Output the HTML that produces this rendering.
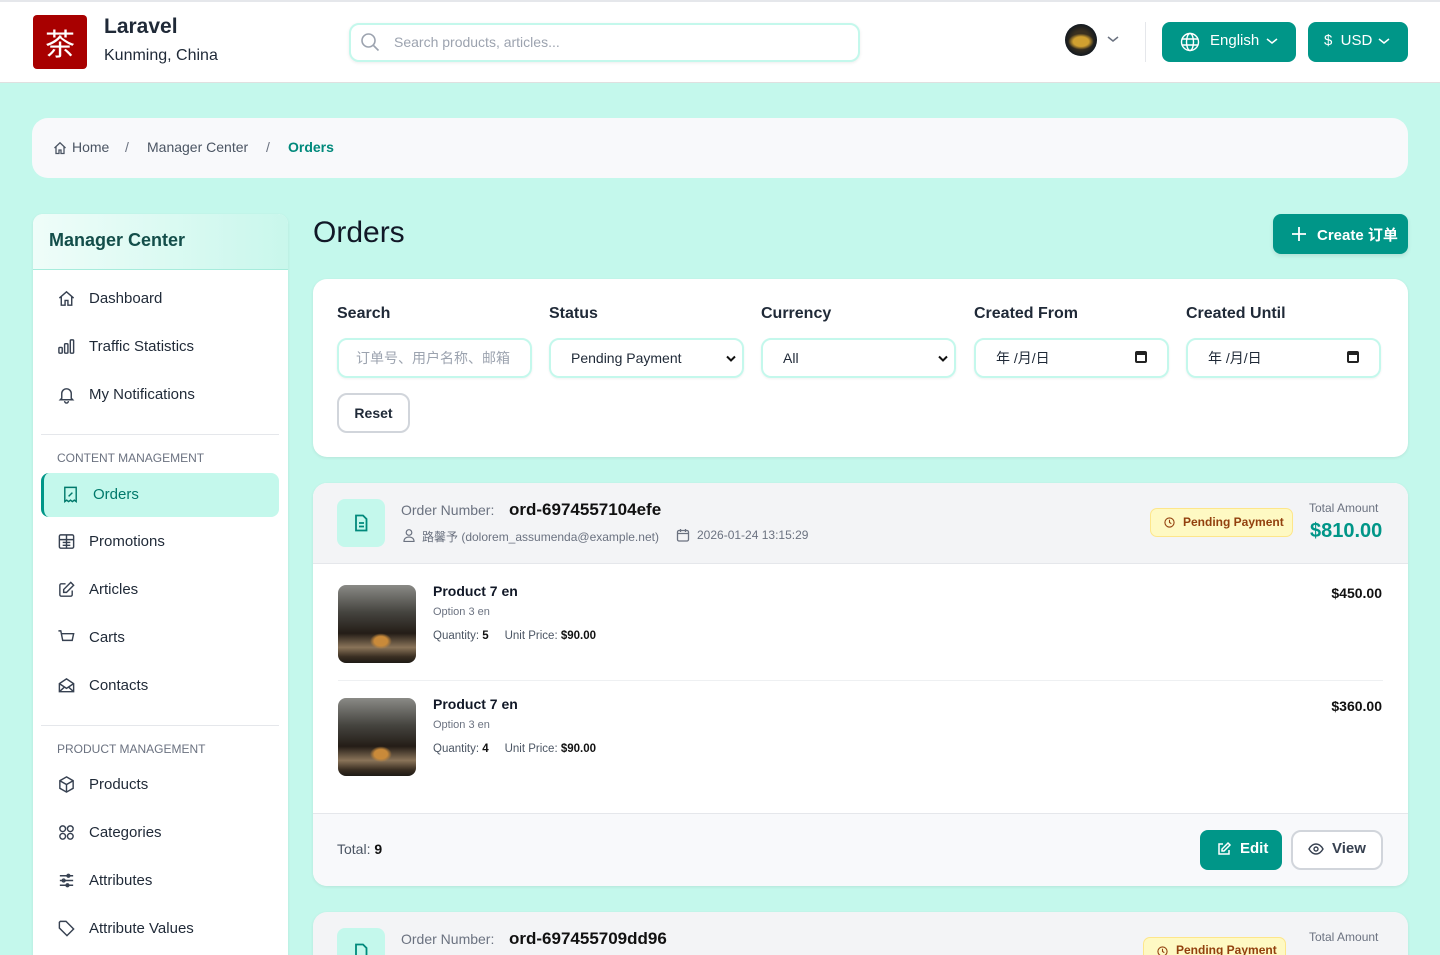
<!DOCTYPE html>
<html style="overflow:hidden;height:955px"><head><meta charset="utf-8"><style>
*{box-sizing:border-box;margin:0;padding:0}
body{width:1440px;height:955px;overflow:hidden;background:#c4f8ec;font-family:"Liberation Sans","Noto Sans CJK SC",sans-serif;color:#1f2937;position:relative}
.abs{position:absolute}
svg{display:block}
.hdr{left:0;top:0;width:1440px;height:83px;background:#fff;border-top:2px solid #e5e7eb;border-bottom:1px solid #e0e0e0}
.teal{background:#009688;color:#fff;border-radius:8px}
.card{background:#fff;border-radius:14px;box-shadow:0 1px 3px rgba(0,0,0,.08)}
.nav{position:absolute;left:57px;font-size:15px;color:#1f2937;display:flex;align-items:center;gap:13px}
.nav svg{width:19px;height:19px;stroke:#374151;fill:none;stroke-width:1.5}
.sec{position:absolute;left:57px;font-size:12px;color:#6b7280}
.lbl{position:absolute;top:305px;font-size:16px;font-weight:bold;color:#1f2937}
.inp{position:absolute;top:338px;width:195px;height:40px;border:2px solid #c4f8ec;border-radius:10px;font-size:14px;padding-left:20px;display:flex;align-items:center;box-shadow:0 1px 2px rgba(0,0,0,.06)}
.thumb{position:absolute;left:338px;width:78px;height:78px;border-radius:8px;background:radial-gradient(ellipse 14% 10% at 55% 72%,#c98a3a 0 60%,transparent 100%),linear-gradient(180deg,#8a8a86 0%,#45443f 35%,#241d17 62%,#8a7459 80%,#3a2e22 92%,#1e1a15 100%)}
.pn{position:absolute;left:433px;font-size:14px;font-weight:bold;color:#111827}
.op{position:absolute;left:433px;font-size:11px;color:#6b7280}
.qt{position:absolute;left:433px;font-size:11.5px;color:#4b5563}
.qt b{color:#111}
.pr{position:absolute;right:58px;font-size:14px;font-weight:bold;color:#111}
</style></head><body>
<div class="abs hdr"></div>
<div class="abs" style="left:33px;top:15px;width:54px;height:54px;background:#a80000;border-radius:4px;color:#fff;font-size:30px;display:flex;align-items:center;justify-content:center;font-family:'Noto Sans CJK SC',sans-serif">茶</div>
<div class="abs" style="left:104px;top:15px;font-size:21px;font-weight:bold;color:#1f2937">Laravel</div>
<div class="abs" style="left:104px;top:47px;font-size:16px;color:#1f2937">Kunming, China</div>
<div class="abs" style="left:349px;top:23px;width:511px;height:39px;border:2px solid #c4f8ec;border-radius:10px;background:#fff;box-shadow:0 1px 3px rgba(0,0,0,.08)"></div>
<svg class="abs" style="left:360px;top:32px" width="20" height="20" viewBox="0 0 20 20" fill="none" stroke="#9ca3af" stroke-width="1.6"><circle cx="8.5" cy="8.5" r="6.5"/><path d="M13.5 13.5l5 5"/></svg>
<div class="abs" style="left:394px;top:34px;font-size:14px;color:#9ca3af">Search products, articles...</div>
<div class="abs" style="left:1065px;top:24px;width:32px;height:32px;border-radius:50%;background:radial-gradient(ellipse 40% 25% at 50% 55%,#d0a030 0 60%,transparent 100%),radial-gradient(circle at 50% 50%,#3a3020 0 40%,#0d1620 75%)"></div>
<svg class="abs" style="left:1106px;top:34px" width="14" height="10" viewBox="0 0 14 10" fill="none" stroke="#6b7280" stroke-width="1.5"><path d="M2 3l5 4 5-4"/></svg>
<div class="abs" style="left:1145px;top:22px;width:1px;height:40px;background:#e5e7eb"></div>
<div class="abs teal" style="left:1162px;top:22px;width:134px;height:40px"></div>
<svg class="abs" style="left:1180px;top:32px" width="20" height="20" viewBox="0 0 20 20" fill="none" stroke="#fff" stroke-width="1.4"><circle cx="10" cy="10" r="8.5"/><ellipse cx="10" cy="10" rx="3.5" ry="8.5"/><path d="M2 7h16M2 13h16"/></svg>
<div class="abs" style="left:1210px;top:32px;font-size:15px;color:#fff">English</div>
<svg class="abs" style="left:1266px;top:37px" width="12" height="8" viewBox="0 0 12 8" fill="none" stroke="#fff" stroke-width="1.5"><path d="M1 2l5 4 5-4"/></svg>
<div class="abs teal" style="left:1308px;top:22px;width:100px;height:40px"></div>
<div class="abs" style="left:1324px;top:32px;font-size:15px;color:#fff">$&nbsp; USD</div>
<svg class="abs" style="left:1378px;top:37px" width="12" height="8" viewBox="0 0 12 8" fill="none" stroke="#fff" stroke-width="1.5"><path d="M1 2l5 4 5-4"/></svg>

<div class="abs" style="left:32px;top:118px;width:1376px;height:60px;background:#f8f9fb;border-radius:16px"></div>
<svg class="abs" style="left:53px;top:141px" width="14" height="14" viewBox="0 0 14 14" fill="none" stroke="#4b5563" stroke-width="1.3"><path d="M1.5 7L7 1.8 12.5 7M3 5.8V12.5h3v-3.5h2v3.5h3V5.8"/></svg>
<div class="abs" style="left:72px;top:139px;font-size:14px;color:#4b5563">Home</div>
<div class="abs" style="left:125px;top:139px;font-size:14px;color:#6b7280">/</div>
<div class="abs" style="left:147px;top:139px;font-size:14px;color:#4b5563">Manager Center</div>
<div class="abs" style="left:266px;top:139px;font-size:14px;color:#6b7280">/</div>
<div class="abs" style="left:288px;top:139px;font-size:14px;color:#00897b;font-weight:bold">Orders</div>

<div class="abs card" style="left:33px;top:214px;width:255px;height:760px;border-radius:10px;overflow:hidden">
<div style="height:56px;background:linear-gradient(90deg,#effdf9,#c9f7ec);border-bottom:1px solid #a7ecdc"></div></div>
<div class="abs" style="left:49px;top:230px;font-size:18px;font-weight:bold;color:#134e4a">Manager Center</div>
<div class="nav" style="top:289px"><svg viewBox="0 0 20 20"><path d="M2.5 9.5L10 3l7.5 6.5M4.5 8v9h4v-5h3v5h4V8"/></svg>Dashboard</div>
<div class="nav" style="top:337px"><svg viewBox="0 0 20 20"><rect x="2" y="11" width="3.5" height="6" rx="1"/><rect x="8" y="7" width="3.5" height="10" rx="1"/><rect x="14" y="3" width="3.5" height="14" rx="1"/></svg>Traffic Statistics</div>
<div class="nav" style="top:385px"><svg viewBox="0 0 20 20"><path d="M5 14V9a5 5 0 0110 0v5l1.5 1.5h-13zM8 17a2 2 0 004 0"/></svg>My Notifications</div>
<div class="abs" style="left:41px;top:434px;width:238px;height:1px;background:#e5e7eb"></div>
<div class="sec" style="top:451px">CONTENT MANAGEMENT</div>
<div class="abs" style="left:41px;top:473px;width:238px;height:44px;background:#c4f8ec;border-radius:8px;border-left:3px solid #009688"></div>
<div class="nav" style="top:485px;left:61px;color:#00796b"><svg viewBox="0 0 20 20" style="stroke:#00796b"><path d="M4 2.5h12v15l-2-1.5-2 1.5-2-1.5-2 1.5-2-1.5-2 1.5zM8 12l4-4M8 8h.01M12 12h.01"/></svg>Orders</div>
<div class="nav" style="top:532px"><svg viewBox="0 0 20 20"><rect x="2.5" y="3" width="15" height="14" rx="1.5"/><path d="M2.5 8h15M10 3v14M6 11h8M6 14h8"/></svg>Promotions</div>
<div class="nav" style="top:580px"><svg viewBox="0 0 20 20"><path d="M9 4H4.5A1.5 1.5 0 003 5.5v10A1.5 1.5 0 004.5 17h10a1.5 1.5 0 001.5-1.5V11M14.5 2.5l3 3L10 13H7v-3z"/></svg>Articles</div>
<div class="nav" style="top:628px"><svg viewBox="0 0 20 20"><path d="M1.5 3h2.5l2 10h10l1.5-7H5M7 17h.01M15 17h.01"/></svg>Carts</div>
<div class="nav" style="top:676px"><svg viewBox="0 0 20 20"><path d="M2.5 8L10 3l7.5 5v8.5h-15zM2.5 8l7.5 5 7.5-5M2.5 16.5l5.5-5M17.5 16.5l-5.5-5"/></svg>Contacts</div>
<div class="abs" style="left:41px;top:725px;width:238px;height:1px;background:#e5e7eb"></div>
<div class="sec" style="top:742px">PRODUCT MANAGEMENT</div>
<div class="nav" style="top:775px"><svg viewBox="0 0 20 20"><path d="M10 2l7 4v8l-7 4-7-4V6zM3 6l7 4 7-4M10 10v8"/></svg>Products</div>
<div class="nav" style="top:823px"><svg viewBox="0 0 20 20"><circle cx="6" cy="6" r="3"/><circle cx="14" cy="6" r="3"/><circle cx="6" cy="14" r="3"/><circle cx="14" cy="14" r="3"/></svg>Categories</div>
<div class="nav" style="top:871px"><svg viewBox="0 0 20 20"><path d="M3 5h14M3 10h14M3 15h14"/><circle cx="12" cy="5" r="1.5"/><circle cx="7" cy="10" r="1.5"/><circle cx="11" cy="15" r="1.5"/></svg>Attributes</div>
<div class="nav" style="top:919px"><svg viewBox="0 0 20 20"><path d="M2.5 3.5v6l8 8 7-7-8-8h-6zM6 6h.01"/></svg>Attribute Values</div>

<div class="abs" style="left:313px;top:216px;font-size:30px;color:#111827">Orders</div>
<div class="abs teal" style="left:1273px;top:214px;width:135px;height:40px;box-shadow:0 2px 4px rgba(0,0,0,.1)"></div>
<svg class="abs" style="left:1290px;top:225px" width="18" height="18" viewBox="0 0 18 18" stroke="#fff" stroke-width="1.8"><path d="M9 2v14M2 9h14"/></svg>
<div class="abs" style="left:1317px;top:224px;font-size:15px;color:#fff;font-weight:bold">Create 订单</div>

<div class="abs card" style="left:313px;top:279px;width:1095px;height:178px"></div>
<div class="lbl" style="left:337px">Search</div>
<div class="lbl" style="left:549px">Status</div>
<div class="lbl" style="left:761px">Currency</div>
<div class="lbl" style="left:974px">Created From</div>
<div class="lbl" style="left:1186px">Created Until</div>
<div class="inp" style="left:337px;color:#9ca3af;padding-left:17px">订单号、用户名称、邮箱</div>
<div class="inp" style="left:549px">Pending Payment<svg style="position:absolute;right:6px;top:15px" width="10" height="7" viewBox="0 0 10 7" fill="none" stroke="#111" stroke-width="2"><path d="M1 1.5l4 4 4-4"/></svg></div>
<div class="inp" style="left:761px">All<svg style="position:absolute;right:6px;top:15px" width="10" height="7" viewBox="0 0 10 7" fill="none" stroke="#111" stroke-width="2"><path d="M1 1.5l4 4 4-4"/></svg></div>
<div class="inp" style="left:974px">年 /月/日<span style="position:absolute;right:20px;top:11px;width:12px;height:12px;border:2px solid #222;border-top-width:4px;border-radius:2px"></span></div>
<div class="inp" style="left:1186px">年 /月/日<span style="position:absolute;right:20px;top:11px;width:12px;height:12px;border:2px solid #222;border-top-width:4px;border-radius:2px"></span></div>
<div class="abs" style="left:337px;top:393px;width:73px;height:40px;border:2px solid #d1d5db;border-radius:10px;font-size:14px;font-weight:bold;display:flex;align-items:center;justify-content:center;background:#fff">Reset</div>

<div class="abs card" style="left:313px;top:483px;width:1095px;height:403px;overflow:hidden">
<div style="height:81px;background:#f3f4f6;border-bottom:1px solid #e5e7eb"></div>
<div style="position:absolute;left:25px;right:25px;top:197px;height:1px;background:#eef0f2"></div>
<div style="position:absolute;left:0;right:0;bottom:0;height:73px;background:#f8f9fb;border-top:1px solid #e5e7eb"></div>
</div>
<div class="abs" style="left:337px;top:499px;width:48px;height:48px;background:#c4f8ec;border-radius:8px"></div>
<svg class="abs" style="left:351px;top:513px" width="20" height="20" viewBox="0 0 20 20" fill="none" stroke="#00897b" stroke-width="1.8"><path d="M5 2.5h7l3.5 3.5v11.5H5zM8 10h5M8 13.5h5"/></svg>
<div class="abs" style="left:401px;top:502px;font-size:14px;color:#6b7280">Order Number:</div>
<div class="abs" style="left:509px;top:500px;font-size:17px;font-weight:bold;color:#111">ord-6974557104efe</div>
<svg class="abs" style="left:403px;top:529px" width="12" height="13" viewBox="0 0 12 13" fill="none" stroke="#6b7280" stroke-width="1.2"><circle cx="6" cy="3.5" r="2.8"/><path d="M1 12.5c0-3 2.2-4.5 5-4.5s5 1.5 5 4.5z"/></svg>
<div class="abs" style="left:422px;top:528px;font-size:12px;color:#6b7280">路馨予 (dolorem_assumenda@example.net)</div>
<svg class="abs" style="left:676px;top:528px" width="14" height="14" viewBox="0 0 14 14" fill="none" stroke="#6b7280" stroke-width="1.3"><rect x="1.5" y="2.5" width="11" height="10.5" rx="1.5"/><path d="M1.5 5.5h11M4.5 1v3M9.5 1v3"/></svg>
<div class="abs" style="left:697px;top:528px;font-size:12px;color:#6b7280">2026-01-24 13:15:29</div>
<div class="abs" style="left:1150px;top:508px;width:143px;height:29px;background:#fef9c3;border:1px solid #fde68a;border-radius:7px"></div>
<svg class="abs" style="left:1164px;top:517px" width="11" height="11" viewBox="0 0 12 12" fill="none" stroke="#92400e" stroke-width="1.2"><circle cx="6" cy="6" r="5"/><path d="M6 3v3l2 1.2"/></svg>
<div class="abs" style="left:1183px;top:515px;font-size:12px;color:#92400e;font-weight:bold">Pending Payment</div>
<div class="abs" style="left:1309px;top:501px;font-size:12px;color:#6b7280">Total Amount</div>
<div class="abs" style="left:1310px;top:520px;font-size:20px;color:#009688;font-weight:bold">$810.00</div>

<div class="thumb" style="top:585px"></div>
<div class="pn" style="top:583px">Product 7 en</div>
<div class="op" style="top:606px">Option 3 en</div>
<div class="qt" style="top:630px">Quantity: <b>5</b>&nbsp;&nbsp;&nbsp;&nbsp; Unit Price: <b>$90.00</b></div>
<div class="pr" style="top:585px">$450.00</div>
<div class="thumb" style="top:698px"></div>
<div class="pn" style="top:696px">Product 7 en</div>
<div class="op" style="top:719px">Option 3 en</div>
<div class="qt" style="top:743px">Quantity: <b>4</b>&nbsp;&nbsp;&nbsp;&nbsp; Unit Price: <b>$90.00</b></div>
<div class="pr" style="top:698px">$360.00</div>

<div class="abs" style="left:337px;top:841px;font-size:14px;color:#4b5563">Total: <b style="color:#111">9</b></div>
<div class="abs teal" style="left:1200px;top:830px;width:82px;height:40px"></div>
<svg class="abs" style="left:1216px;top:841px" width="16" height="16" viewBox="0 0 16 16" fill="none" stroke="#fff" stroke-width="1.5"><path d="M7 3H3v10h10V9M12 2l2 2-6 6H6V8z"/></svg>
<div class="abs" style="left:1240px;top:840px;font-size:15px;color:#fff;font-weight:bold">Edit</div>
<div class="abs" style="left:1291px;top:830px;width:92px;height:40px;border:2px solid #d1d5db;border-radius:10px;background:#fff"></div>
<svg class="abs" style="left:1308px;top:842px" width="16" height="14" viewBox="0 0 16 14" fill="none" stroke="#374151" stroke-width="1.4"><path d="M1 7c2-3.5 4.5-5 7-5s5 1.5 7 5c-2 3.5-4.5 5-7 5s-5-1.5-7-5z"/><circle cx="8" cy="7" r="2"/></svg>
<div class="abs" style="left:1332px;top:840px;font-size:15px;color:#374151;font-weight:bold">View</div>

<div class="abs card" style="left:313px;top:912px;width:1095px;height:80px;background:#f3f4f6"></div>
<div class="abs" style="left:337px;top:928px;width:48px;height:48px;background:#c4f8ec;border-radius:8px"></div>
<svg class="abs" style="left:351px;top:942px" width="20" height="20" viewBox="0 0 20 20" fill="none" stroke="#00897b" stroke-width="1.8"><path d="M5 2.5h7l3.5 3.5v11.5H5z"/></svg>
<div class="abs" style="left:401px;top:931px;font-size:14px;color:#6b7280">Order Number:</div>
<div class="abs" style="left:509px;top:929px;font-size:17px;font-weight:bold;color:#111">ord-697455709dd96</div>
<div class="abs" style="left:1143px;top:937px;width:143px;height:29px;background:#fef9c3;border:1px solid #fde68a;border-radius:7px"></div>
<svg class="abs" style="left:1157px;top:946px" width="11" height="11" viewBox="0 0 12 12" fill="none" stroke="#92400e" stroke-width="1.2"><circle cx="6" cy="6" r="5"/><path d="M6 3v3l2 1.2"/></svg>
<div class="abs" style="left:1176px;top:943px;font-size:12px;color:#92400e;font-weight:bold">Pending Payment</div>
<div class="abs" style="left:1309px;top:930px;font-size:12px;color:#6b7280">Total Amount</div>
</body></html>
